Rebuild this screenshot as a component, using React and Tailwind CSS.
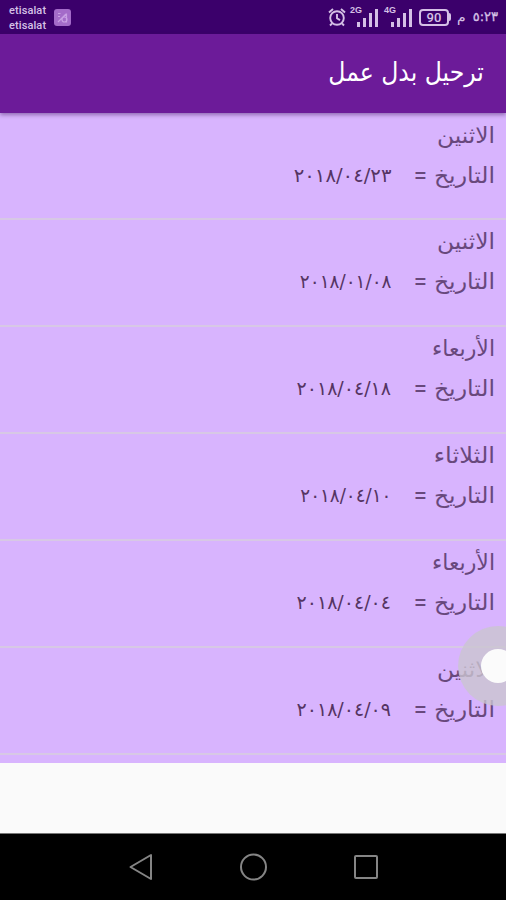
const days = [
  { day: 'الاثنين', date: '٢٠١٨/٠٤/٢٣', dayFit: 'scale-x-[1.06]', dateFit: 'scale-x-[1.035]' },
  { day: 'الاثنين', date: '٢٠١٨/٠١/٠٨', dayFit: 'scale-x-[1.06]', dateFit: 'scale-x-[0.97]' },
  { day: 'الأربعاء', date: '٢٠١٨/٠٤/١٨', dayFit: 'scale-x-100', dateFit: 'scale-x-100' },
  { day: 'الثلاثاء', date: '٢٠١٨/٠٤/١٠', dayFit: 'scale-x-[1.1]', dateFit: 'scale-x-[0.965]' },
  { day: 'الأربعاء', date: '٢٠١٨/٠٤/٠٤', dayFit: 'scale-x-100', dateFit: 'scale-x-100' },
  { day: 'الاثنين', date: '٢٠١٨/٠٤/٠٩', dayFit: 'scale-x-[1.06]', dateFit: 'scale-x-100' },
]

function Signal({ label }) {
  return (
    <div className="relative w-7 h-[21px]">
      <span className="absolute left-0 -top-[2px] text-[9px] leading-[10px] font-bold font-['Liberation_Sans',sans-serif]">{label}</span>
      <svg className="absolute right-0 bottom-px" width="21" height="18" fill="currentColor">
        <rect x="0" y="13" width="3" height="5" />
        <rect x="6" y="9" width="3" height="9" />
        <rect x="12" y="4" width="3" height="14" />
        <rect x="18" y="0" width="3" height="18" />
      </svg>
    </div>
  )
}

function StatusBar() {
  return (
    <div className="h-[34px] shrink-0 bg-[#3b006b] text-[#d5c0e6] flex items-center justify-between pl-[9px] pr-2 font-['Roboto',sans-serif]">
      <div className="flex items-center gap-2">
        <div className="text-[11px] leading-[15.5px] pt-0.5 font-medium tracking-[0.1px]">
          <p>etisalat</p>
          <p>etisalat</p>
        </div>
        <svg width="17" height="17" viewBox="0 0 17 17" fill="none">
          <rect width="17" height="17" rx="3" fill="#a46bc9" />
          <path d="M4 4.5h2.5M4 7.5h2M4 13l8-8M8 10.5a2.5 2.5 0 1 0 5 0 2.5 2.5 0 0 0-5 0M12.5 4.5v9" stroke="#c99fe4" strokeWidth="1.2" />
        </svg>
      </div>
      <div className="flex items-center">
        <svg className="mr-1" width="18" height="20" viewBox="0 0 18 20" fill="none" stroke="currentColor" strokeWidth="1.9">
          <circle cx="9" cy="11" r="6.8" />
          <path d="M9 7v4.3l3 1.8M1 5.5l4-3.5M17 5.5 13 2M4 16.5l-2 2M14 16.5l2 2" />
        </svg>
        <Signal label="2G" />
        <div className="w-1.5" />
        <Signal label="4G" />
        <div className="ml-[7px] w-[30px] h-[17px] border-2 border-current rounded-[4px] text-[13px] leading-[14px] font-medium text-center">90</div>
        <div className="w-0.5 h-2 bg-current rounded-r-sm mr-[6px]" />
        <div dir="rtl" className="flex gap-[7px] text-[14px] leading-5 font-['DejaVu_Sans',sans-serif]">
          <span className="text-[13px] [-webkit-text-stroke:0.3px]">٥:٢٣</span>
          <span>م</span>
        </div>
      </div>
    </div>
  )
}

function DayRow({ day, date, dayFit, dateFit }) {
  return (
    <div className="h-[106.85px] shrink-0 border-b-2 border-[#d7c8e5] pr-[11px] pt-0.5 text-[22px] leading-10 text-[#68487c]">
      <p className={`origin-right ${dayFit}`}>{day}</p>
      <div className="flex items-center">
        <span className="w-[61px] origin-right scale-x-[1.07]">التاريخ</span>
        <span className="w-[13px] ml-[23px] mr-[7px] text-[24px] font-['Roboto',sans-serif]">=</span>
        <span dir="ltr" className={`text-[19px] text-[#553463] pb-0.5 leading-[38px] origin-right ${dateFit}`}>{date}</span>
      </div>
    </div>
  )
}

function NavBar() {
  return (
    <div className="h-[67px] shrink-0 bg-black border-t border-[#777] pb-px flex justify-center items-center gap-[86px] text-[#858585]">
      <svg width="26" height="28" viewBox="0 0 26 28" fill="none" stroke="currentColor" strokeWidth="2" strokeLinejoin="round">
        <path d="M3.5 14 24 2v24z" />
      </svg>
      <svg width="28" height="28" viewBox="0 0 28 28" fill="none" stroke="currentColor" strokeWidth="2">
        <circle cx="14.5" cy="14" r="12.5" />
      </svg>
      <svg width="26" height="26" viewBox="0 0 26 26" fill="none" stroke="currentColor" strokeWidth="2">
        <rect x="2" y="2" width="22" height="22" rx="1" />
      </svg>
    </div>
  )
}

export default function App() {
  return (
    <div className="relative w-[506px] h-[900px] overflow-hidden flex flex-col bg-[#fafafa]">
      <StatusBar />
      <header dir="rtl" className="relative z-10 h-[78.5px] shrink-0 bg-[#6c1b99] shadow-[0_2px_4px_rgba(60,20,90,0.45)] pr-[22px] pb-0.5 flex items-center text-white text-[26px] font-['DejaVu_Sans',sans-serif]">
        <h1 className="origin-right scale-x-[0.905]">ترحيل بدل عمل</h1>
      </header>
      <main dir="rtl" className="h-[650px] shrink-0 pt-px overflow-hidden flex flex-col bg-[#d8b4fe] font-['DejaVu_Sans',sans-serif]">
        {days.map((item) => (
          <DayRow key={item.date} {...item} />
        ))}
      </main>
      <div className="flex-1" />
      <NavBar />

      {/* floating assistive button */}
      <div className="absolute left-[458px] top-[626px] w-20 h-20 rounded-full bg-[#cbc5cf]/80 flex items-center justify-center">
        <div className="w-[34px] h-[34px] rounded-full bg-[#fbfbfb]" />
      </div>
    </div>
  )
}
